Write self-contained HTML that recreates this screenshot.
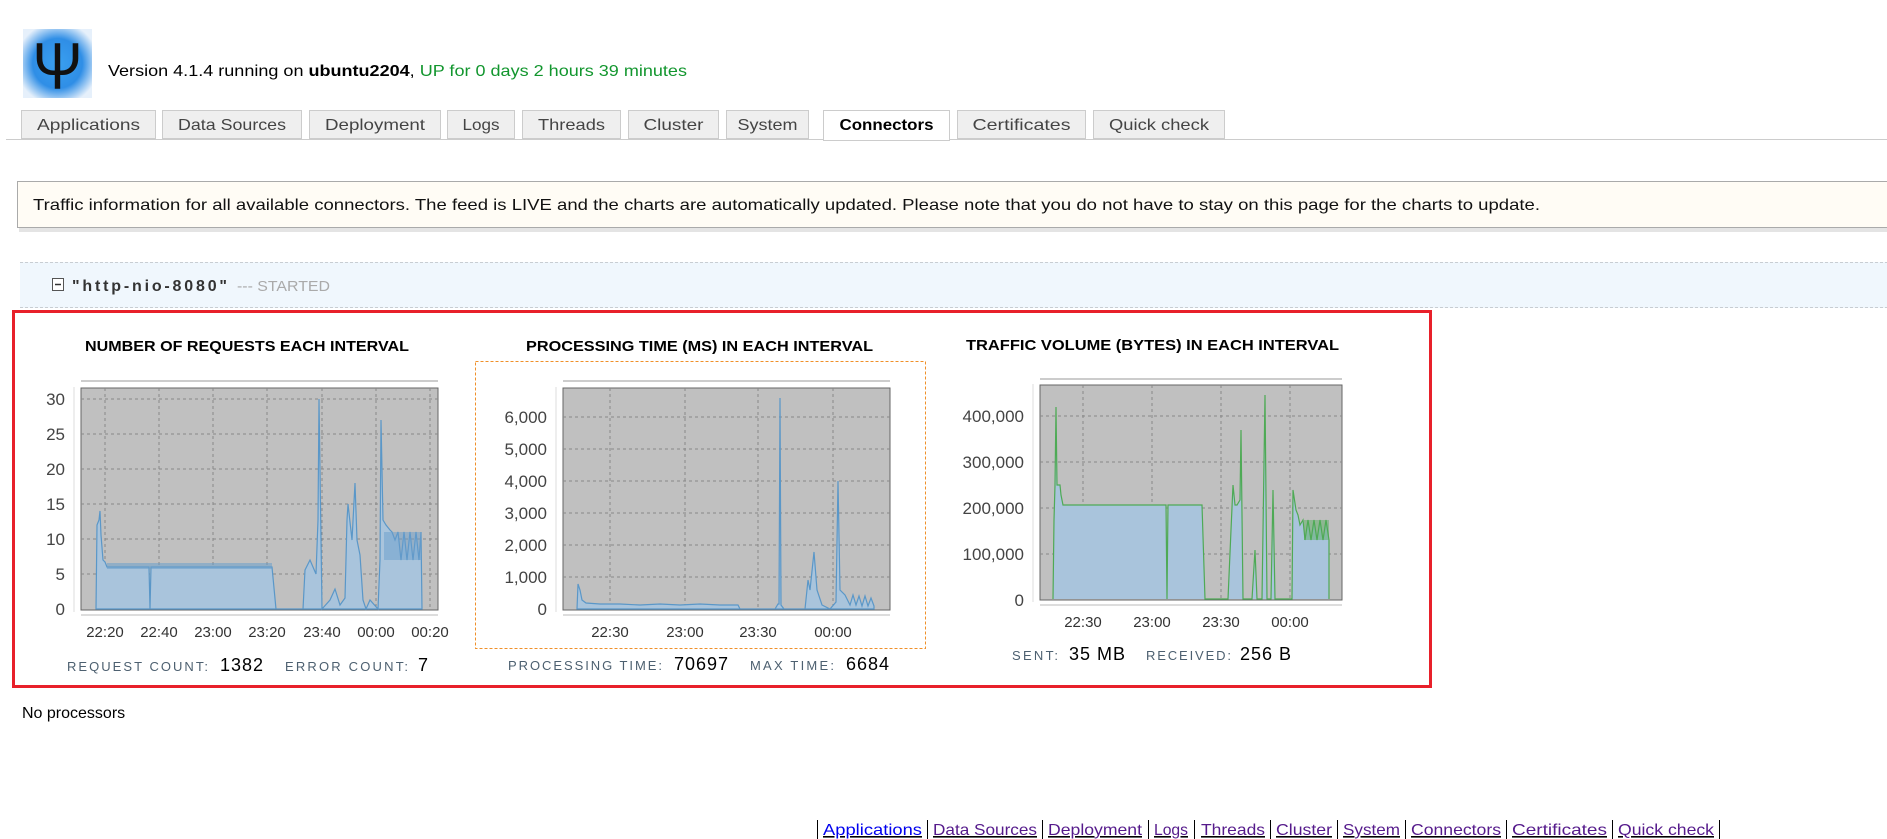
<!DOCTYPE html>
<html><head><meta charset="utf-8"><style>
html,body{margin:0;padding:0;background:#fff;width:1887px;height:839px;overflow:hidden}
svg{display:block}
text{font-family:"Liberation Sans",sans-serif}
</style></head><body>
<svg width="1887" height="839" xmlns="http://www.w3.org/2000/svg">
<defs>
<radialGradient id="lg" cx="50%" cy="50%" r="60%">
<stop offset="0" stop-color="#3aa0f0"/><stop offset="0.6" stop-color="#2f8ee6"/><stop offset="1" stop-color="#e6f0fb"/>
</radialGradient>
</defs>
<!-- logo -->
<rect x="23" y="29" width="69" height="69" fill="url(#lg)"/>
<text x="57.5" y="89" text-anchor="middle" font-family="Liberation Serif,serif" font-size="66" fill="#111" textLength="50" lengthAdjust="spacingAndGlyphs">Ψ</text>
<text x="108" y="76" font-size="16" fill="#000" textLength="579" lengthAdjust="spacingAndGlyphs">Version 4.1.4 running on <tspan font-weight="bold">ubuntu2204</tspan>, <tspan fill="#12962e">UP for 0 days 2 hours 39 minutes</tspan></text>

<!-- tabs -->
<line x1="6" y1="139.5" x2="1887" y2="139.5" stroke="#ccc"/>
<g font-size="16" fill="#444">
<rect x="21.5" y="110.5" width="134" height="28" fill="#efefef" stroke="#ccc"/><text x="88.5" y="130" text-anchor="middle" textLength="103" lengthAdjust="spacingAndGlyphs">Applications</text>
<rect x="162.5" y="110.5" width="139" height="28" fill="#efefef" stroke="#ccc"/><text x="232" y="130" text-anchor="middle" textLength="108" lengthAdjust="spacingAndGlyphs">Data Sources</text>
<rect x="309.5" y="110.5" width="131" height="28" fill="#efefef" stroke="#ccc"/><text x="375" y="130" text-anchor="middle" textLength="100" lengthAdjust="spacingAndGlyphs">Deployment</text>
<rect x="447.5" y="110.5" width="67" height="28" fill="#efefef" stroke="#ccc"/><text x="481" y="130" text-anchor="middle" textLength="37" lengthAdjust="spacingAndGlyphs">Logs</text>
<rect x="522.5" y="110.5" width="98" height="28" fill="#efefef" stroke="#ccc"/><text x="571.5" y="130" text-anchor="middle" textLength="67" lengthAdjust="spacingAndGlyphs">Threads</text>
<rect x="628.5" y="110.5" width="90" height="28" fill="#efefef" stroke="#ccc"/><text x="673.5" y="130" text-anchor="middle" textLength="60" lengthAdjust="spacingAndGlyphs">Cluster</text>
<rect x="726.5" y="110.5" width="82" height="28" fill="#efefef" stroke="#ccc"/><text x="767.5" y="130" text-anchor="middle" textLength="60" lengthAdjust="spacingAndGlyphs">System</text>
<rect x="823.5" y="110.5" width="126" height="30" fill="#fff" stroke="#ccc"/><line x1="824" y1="139.5" x2="949" y2="139.5" stroke="#fff"/><text x="886.5" y="130" text-anchor="middle" fill="#000" font-weight="bold" textLength="94" lengthAdjust="spacingAndGlyphs">Connectors</text>
<rect x="957.5" y="110.5" width="128" height="28" fill="#efefef" stroke="#ccc"/><text x="1021.5" y="130" text-anchor="middle" textLength="98" lengthAdjust="spacingAndGlyphs">Certificates</text>
<rect x="1093.5" y="110.5" width="131" height="28" fill="#efefef" stroke="#ccc"/><text x="1159" y="130" text-anchor="middle" textLength="100" lengthAdjust="spacingAndGlyphs">Quick check</text>
</g>

<!-- info box -->
<rect x="19" y="184" width="1870" height="48" fill="#e4e4e4"/>
<rect x="17.5" y="181.5" width="1872" height="46" fill="#fffcf5" stroke="#aaa"/>
<text x="33" y="210" font-size="16" fill="#111" textLength="1507" lengthAdjust="spacingAndGlyphs">Traffic information for all available connectors. The feed is LIVE and the charts are automatically updated. Please note that you do not have to stay on this page for the charts to update.</text>

<!-- connector header -->
<rect x="20" y="262" width="1867" height="46" fill="#f0f7fd"/>
<line x1="20" y1="262.5" x2="1887" y2="262.5" stroke="#c8cdd2" stroke-dasharray="3,2"/>
<line x1="20" y1="307.5" x2="1887" y2="307.5" stroke="#c8cdd2" stroke-dasharray="3,2"/>
<rect x="52.5" y="278.5" width="11" height="12" fill="#fff" stroke="#555"/>
<line x1="55" y1="284.5" x2="61" y2="284.5" stroke="#333" stroke-width="1.5"/>
<text x="72" y="291" font-size="16" font-weight="bold" fill="#333" textLength="155" lengthAdjust="spacing">"http-nio-8080"</text>
<text x="237" y="291" font-size="15" fill="#aaa" textLength="93" lengthAdjust="spacingAndGlyphs">--- STARTED</text>

<!-- red box -->
<rect x="13.5" y="311.5" width="1417" height="375" fill="none" stroke="#e8202a" stroke-width="3"/>

<!-- chart titles -->
<g font-size="15" font-weight="bold" fill="#000">
<text x="85" y="351" textLength="324" lengthAdjust="spacingAndGlyphs">NUMBER OF REQUESTS EACH INTERVAL</text>
<text x="526" y="351" textLength="347" lengthAdjust="spacingAndGlyphs">PROCESSING TIME (MS) IN EACH INTERVAL</text>
<text x="966" y="350" textLength="373" lengthAdjust="spacingAndGlyphs">TRAFFIC VOLUME (BYTES) IN EACH INTERVAL</text>
</g>

<!-- chart 1 -->
<line x1="81" y1="381" x2="438" y2="381" stroke="#ccc" stroke-width="2"/>
<line x1="74" y1="387" x2="74" y2="612" stroke="#ddd"/>
<line x1="81" y1="615" x2="438" y2="615" stroke="#ddd" stroke-width="2"/>
<rect x="81" y="388" width="357" height="222" fill="#c0c0c0" stroke="#666"/>
<g stroke="#888" stroke-dasharray="3,3">
<line x1="81" y1="399" x2="438" y2="399"/><line x1="81" y1="434" x2="438" y2="434"/><line x1="81" y1="469" x2="438" y2="469"/><line x1="81" y1="504" x2="438" y2="504"/><line x1="81" y1="539" x2="438" y2="539"/><line x1="81" y1="574" x2="438" y2="574"/>
<line x1="105" y1="388" x2="105" y2="610"/><line x1="159" y1="388" x2="159" y2="610"/><line x1="213" y1="388" x2="213" y2="610"/><line x1="267" y1="388" x2="267" y2="610"/><line x1="322" y1="388" x2="322" y2="610"/><line x1="376" y1="388" x2="376" y2="610"/><line x1="430" y1="388" x2="430" y2="610"/>
</g>
<path d="M96,609 L97,525 L99,520 L100,511 L101,535 L103,560 L105,562 L107,567 L149,567 L150,609 L151,567 L272,567 L276,609 L303,609 L305,570 L310,560 L316,574 L318,520 L319,399 L321,540 L322,609 L330,600 L335,589 L340,605 L345,598 L347,520 L348,504 L352,540 L355,483 L357,540 L360,555 L363,600 L366,609 L370,600 L378,609 L380,560 L381,420 L383,520 L386,525 L390,530 L392,532 L395,540 L398,532 L401,560 L404,532 L407,560 L410,532 L413,560 L416,532 L419,560 L421,532 L422,609 Z" fill="#a9c4dc" stroke="#5a97c8" stroke-width="1.2"/>
<rect x="107" y="563" width="165" height="6" fill="#6a9ecb" opacity="0.55"/>
<rect x="384" y="532" width="37" height="28" fill="#6a9ecb" opacity="0.5"/>
<g font-size="17" fill="#444" text-anchor="end">
<text x="65" y="405">30</text><text x="65" y="440">25</text><text x="65" y="475">20</text><text x="65" y="510">15</text><text x="65" y="545">10</text><text x="65" y="580">5</text><text x="65" y="615">0</text>
</g>
<g font-size="15" fill="#333" text-anchor="middle">
<text x="105" y="637">22:20</text><text x="159" y="637">22:40</text><text x="213" y="637">23:00</text><text x="267" y="637">23:20</text><text x="322" y="637">23:40</text><text x="376" y="637">00:00</text><text x="430" y="637">00:20</text>
</g>
<text x="67" y="671" font-size="13" fill="#4d6070" letter-spacing="2" textLength="143" lengthAdjust="spacing">REQUEST COUNT:</text>
<text x="220" y="671" font-size="18" fill="#000" letter-spacing="1">1382</text>
<text x="285" y="671" font-size="13" fill="#4d6070" letter-spacing="2" textLength="125" lengthAdjust="spacing">ERROR COUNT:</text>
<text x="418" y="671" font-size="18" fill="#000">7</text>

<!-- chart 2 -->
<rect x="475.5" y="361.5" width="450" height="287" fill="none" stroke="#f0902a" stroke-dasharray="3,2"/>
<line x1="563" y1="381" x2="890" y2="381" stroke="#ccc" stroke-width="2"/>
<line x1="556" y1="387" x2="556" y2="612" stroke="#ddd"/>
<line x1="563" y1="615" x2="890" y2="615" stroke="#ddd" stroke-width="2"/>
<rect x="563" y="388" width="327" height="222" fill="#c0c0c0" stroke="#666"/>
<g stroke="#888" stroke-dasharray="3,3">
<line x1="563" y1="417" x2="890" y2="417"/><line x1="563" y1="449" x2="890" y2="449"/><line x1="563" y1="481" x2="890" y2="481"/><line x1="563" y1="513" x2="890" y2="513"/><line x1="563" y1="545" x2="890" y2="545"/><line x1="563" y1="577" x2="890" y2="577"/>
<line x1="610" y1="388" x2="610" y2="610"/><line x1="685" y1="388" x2="685" y2="610"/><line x1="758" y1="388" x2="758" y2="610"/><line x1="833" y1="388" x2="833" y2="610"/>
</g>
<path d="M577,609 L578,584 L580,590 L582,600 L586,603 L600,604 L620,604 L640,605 L660,604 L680,605 L700,604 L720,605 L738,605 L740,609 L775,609 L778,604 L779,604 L780,398 L781,605 L784,609 L805,609 L808,580 L810,590 L814,552 L817,590 L822,605 L830,609 L836,602 L838,481 L840,590 L845,595 L850,605 L853,595 L856,605 L859,596 L862,606 L865,596 L868,606 L871,598 L874,606 L874,609 Z" fill="#a9c4dc" stroke="#5a97c8" stroke-width="1.2"/>
<g font-size="17" fill="#444" text-anchor="end">
<text x="547" y="423">6,000</text><text x="547" y="455">5,000</text><text x="547" y="487">4,000</text><text x="547" y="519">3,000</text><text x="547" y="551">2,000</text><text x="547" y="583">1,000</text><text x="547" y="615">0</text>
</g>
<g font-size="15" fill="#333" text-anchor="middle">
<text x="610" y="637">22:30</text><text x="685" y="637">23:00</text><text x="758" y="637">23:30</text><text x="833" y="637">00:00</text>
</g>
<text x="508" y="670" font-size="13" fill="#4d6070" letter-spacing="2" textLength="156" lengthAdjust="spacing">PROCESSING TIME:</text>
<text x="674" y="670" font-size="18" fill="#000" letter-spacing="1">70697</text>
<text x="750" y="670" font-size="13" fill="#4d6070" letter-spacing="2" textLength="86" lengthAdjust="spacing">MAX TIME:</text>
<text x="846" y="670" font-size="18" fill="#000" letter-spacing="1">6684</text>

<!-- chart 3 -->
<line x1="1040" y1="379" x2="1342" y2="379" stroke="#ccc" stroke-width="2"/>
<line x1="1033" y1="384" x2="1033" y2="602" stroke="#ddd"/>
<line x1="1040" y1="605" x2="1342" y2="605" stroke="#ddd" stroke-width="2"/>
<rect x="1040" y="385" width="302" height="215" fill="#c0c0c0" stroke="#666"/>
<g stroke="#888" stroke-dasharray="3,3">
<line x1="1040" y1="416" x2="1342" y2="416"/><line x1="1040" y1="462" x2="1342" y2="462"/><line x1="1040" y1="508" x2="1342" y2="508"/><line x1="1040" y1="554" x2="1342" y2="554"/>
<line x1="1083" y1="385" x2="1083" y2="600"/><line x1="1152" y1="385" x2="1152" y2="600"/><line x1="1221" y1="385" x2="1221" y2="600"/><line x1="1290" y1="385" x2="1290" y2="600"/>
</g>
<path d="M1053,599 L1054,520 L1055,485 L1056,407 L1057,485 L1060,485 L1061,495 L1063,505 L1166,505 L1167,599 L1168,505 L1202,505 L1205,599 L1228,599 L1231,530 L1233,485 L1235,505 L1237,505 L1240,500 L1241,430 L1243,599 L1252,599 L1255,550 L1257,599 L1262,599 L1265,395 L1267,599 L1271,599 L1273,490 L1275,599 L1292,599 L1293,490 L1296,510 L1298,515 L1300,525 L1303,520 L1305,540 L1308,520 L1311,540 L1314,520 L1317,540 L1320,520 L1323,540 L1326,520 L1329,540 L1329,599 Z" fill="#a9c4dc"/>
<rect x="1304" y="520" width="25" height="20" fill="#5cae63" opacity="0.5"/>
<path d="M1053,599 L1054,520 L1055,485 L1056,407 L1057,485 L1060,485 L1061,495 L1063,505 L1166,505 L1167,599 L1168,505 L1202,505 L1205,599 L1228,599 L1231,530 L1233,485 L1235,505 L1237,505 L1240,500 L1241,430 L1243,599 L1252,599 L1255,550 L1257,599 L1262,599 L1265,395 L1267,599 L1271,599 L1273,490 L1275,599 L1292,599 L1293,490 L1296,510 L1298,515 L1300,525 L1303,520 L1305,540 L1308,520 L1311,540 L1314,520 L1317,540 L1320,520 L1323,540 L1326,520 L1329,540 L1329,599" fill="none" stroke="#4eaa55" stroke-width="1.2"/>
<g font-size="17" fill="#444" text-anchor="end">
<text x="1024" y="422">400,000</text><text x="1024" y="468">300,000</text><text x="1024" y="514">200,000</text><text x="1024" y="560">100,000</text><text x="1024" y="606">0</text>
</g>
<g font-size="15" fill="#333" text-anchor="middle">
<text x="1083" y="627">22:30</text><text x="1152" y="627">23:00</text><text x="1221" y="627">23:30</text><text x="1290" y="627">00:00</text>
</g>
<text x="1012" y="660" font-size="13" fill="#4d6070" letter-spacing="2" textLength="48" lengthAdjust="spacing">SENT:</text>
<text x="1069" y="660" font-size="18" fill="#000" letter-spacing="1">35 MB</text>
<text x="1146" y="660" font-size="13" fill="#4d6070" letter-spacing="2" textLength="87" lengthAdjust="spacing">RECEIVED:</text>
<text x="1240" y="660" font-size="18" fill="#000" letter-spacing="1">256 B</text>

<text x="22" y="718" font-size="16" fill="#000">No processors</text>

<!-- footer -->
<g font-size="16" text-decoration="underline">
<text x="823" y="835" fill="#0000ee" textLength="99" lengthAdjust="spacingAndGlyphs">Applications</text>
<g fill="#551a8b">
<text x="933" y="835" textLength="104" lengthAdjust="spacingAndGlyphs">Data Sources</text>
<text x="1048" y="835" textLength="94" lengthAdjust="spacingAndGlyphs">Deployment</text>
<text x="1154" y="835" textLength="34" lengthAdjust="spacingAndGlyphs">Logs</text>
<text x="1201" y="835" textLength="64" lengthAdjust="spacingAndGlyphs">Threads</text>
<text x="1276" y="835" textLength="56" lengthAdjust="spacingAndGlyphs">Cluster</text>
<text x="1343" y="835" textLength="57" lengthAdjust="spacingAndGlyphs">System</text>
<text x="1411" y="835" textLength="90" lengthAdjust="spacingAndGlyphs">Connectors</text>
<text x="1512" y="835" textLength="95" lengthAdjust="spacingAndGlyphs">Certificates</text>
<text x="1618" y="835" textLength="96" lengthAdjust="spacingAndGlyphs">Quick check</text>
</g>
</g>
<g stroke="#000">
<line x1="817.5" y1="820" x2="817.5" y2="839"/><line x1="927.5" y1="820" x2="927.5" y2="839"/><line x1="1042.5" y1="820" x2="1042.5" y2="839"/><line x1="1148.5" y1="820" x2="1148.5" y2="839"/><line x1="1194.5" y1="820" x2="1194.5" y2="839"/><line x1="1270.5" y1="820" x2="1270.5" y2="839"/><line x1="1337.5" y1="820" x2="1337.5" y2="839"/><line x1="1405.5" y1="820" x2="1405.5" y2="839"/><line x1="1506.5" y1="820" x2="1506.5" y2="839"/><line x1="1612.5" y1="820" x2="1612.5" y2="839"/><line x1="1719.5" y1="820" x2="1719.5" y2="839"/>
</g>
</svg>
</body></html>
